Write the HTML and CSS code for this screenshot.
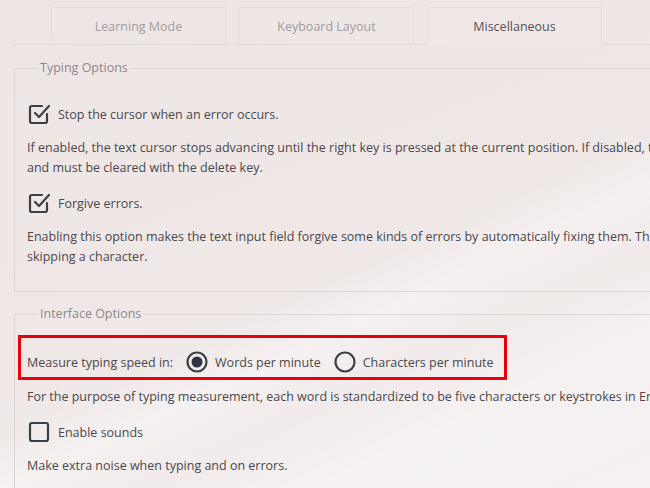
FILE: index.html
```html
<!DOCTYPE html>
<html lang="en">
<head>
    <meta charset="UTF-8">
    <meta name="viewport" content="width=device-width, initial-scale=1.0">
    <title>Settings</title>
    <link rel="stylesheet" href="styles.css">
</head>
<body>
    <div id="page">
        <div class="tabs">
            <div class="tab">Learning Mode</div>
            <div class="tab">Keyboard Layout</div>
            <div class="tab active">Miscellaneous</div>
        </div>

        <fieldset class="group">
            <legend>Typing Options</legend>
            <label class="option">
                <svg class="icon" viewBox="0 0 24 24"><polyline points="8 11 12 15 22 4"/><path d="M20 12v7a2 2 0 0 1-2 2H5a2 2 0 0 1-2-2V6a2 2 0 0 1 2-2h10"/></svg>
                <span>Stop the cursor when an error occurs.</span>
            </label>
            <p class="help">If enabled, the text cursor stops advancing until the right key is pressed at the current position. If disabled, typing errors are shown in the text<br>and must be cleared with the delete key.</p>
            <label class="option">
                <svg class="icon" viewBox="0 0 24 24"><polyline points="8 11 12 15 22 4"/><path d="M20 12v7a2 2 0 0 1-2 2H5a2 2 0 0 1-2-2V6a2 2 0 0 1 2-2h10"/></svg>
                <span>Forgive errors.</span>
            </label>
            <p class="help">Enabling this option makes the text input field forgive some kinds of errors by automatically fixing them. This includes, for example, adding or<br>skipping a character.</p>
        </fieldset>

        <fieldset class="group interface">
            <legend>Interface Options</legend>
            <div class="speed-row">
                <span>Measure typing speed in:</span>
                <label class="radio">
                    <svg class="icon" viewBox="0 0 24 24"><circle cx="12" cy="12" r="9.5"/><circle class="dot" cx="12" cy="12" r="5.5"/></svg>
                    <span>Words per minute</span>
                </label>
                <label class="radio">
                    <svg class="icon" viewBox="0 0 24 24"><circle cx="12" cy="12" r="9.5"/></svg>
                    <span>Characters per minute</span>
                </label>
            </div>
            <p class="help speed-help">For the purpose of typing measurement, each word is standardized to be five characters or keystrokes in English, including spaces and punctuation.</p>
            <label class="option">
                <svg class="icon" viewBox="0 0 24 24"><rect x="3" y="3" width="18" height="18" rx="2"/></svg>
                <span>Enable sounds</span>
            </label>
            <p class="help">Make extra noise when typing and on errors.</p>
        </fieldset>
    </div>
</body>
</html>
```

FILE: styles.css
```css
html, body {
    margin: 0;
    height: 100%;
    overflow: hidden;
}
body {
    font-family: "Open Sans", "Noto Sans", sans-serif;
    font-size: 12.5px;
    color: #4a474c;
    background:
        linear-gradient(155deg, rgba(255,255,255,0) 55%, rgba(255,255,255,0.35) 62%, rgba(255,255,255,0) 70%, rgba(255,255,255,0.3) 80%, rgba(255,255,255,0.15) 100%),
        linear-gradient(160deg, #eee6e5 0%, #efe8e7 50%, #f3eeee 100%);
}
#page {
    width: 1000px;
}
.tabs {
    display: flex;
    gap: 13px;
    margin: 7px 0 0 12px;
    padding-left: 39px;
    border-bottom: 1px solid #e0d9d8;
}
.tab {
    width: 173px;
    height: 36px;
    line-height: 37px;
    text-align: center;
    color: #a19c9e;
    border: 1px solid #e4dddc;
    border-bottom: none;
}
.tab.active {
    color: #555257;
    margin-bottom: -1px;
    height: 37px;
    background: #efe8e7;
}
.group {
    margin: 14px 0 0 14px;
    padding: 25px 12px 11px 12px;
    border: 1px solid #ddd6d5;
    border-right: none;
}
.group legend {
    color: #8b878a;
    line-height: 18px;
    padding: 0 1px;
    margin-left: 12px;
}
.group.interface {
    margin-top: 13px;
    padding-top: 12px;
}
.option {
    display: flex;
    align-items: center;
    gap: 7px;
    height: 24px;
}
.help {
    margin: 12px 0 13px;
    line-height: 20px;
    white-space: nowrap;
}
.icon {
    width: 24px;
    height: 24px;
    fill: none;
    stroke: #3b3f48;
    stroke-width: 2.2;
    stroke-linecap: round;
    stroke-linejoin: round;
    flex: none;
}
.icon .dot {
    fill: #2e3645;
    stroke: none;
}
.speed-row {
    display: inline-flex;
    align-items: center;
    height: 24px;
    padding: 12px 10px 3px 6px;
    margin-left: -9px;
    border: 3px solid #e8000c;
}
.radio {
    display: flex;
    align-items: center;
    gap: 6px;
    margin-left: 12px;
}
.help.speed-help {
    margin-top: 7px;
}
```
